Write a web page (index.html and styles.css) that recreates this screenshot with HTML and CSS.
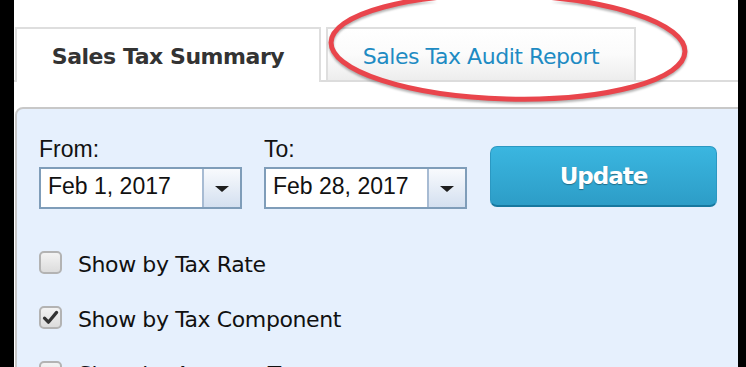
FILE: index.html
```html
<!DOCTYPE html>
<html lang="en">
<head>
 <meta charset="UTF-8">
 <title>Sales Tax Summary</title>
 <link rel="stylesheet" href="styles.css">
</head>
<body>
<div class="page">
 <div class="tabs">
  <div class="tab tab_active">Sales Tax Summary</div>
  <div class="tab tab_link">Sales Tax Audit Report</div>
 </div>
 <div class="panel">
  <div class="range">
   <div class="field">
    <label>From:</label>
    <div class="combo">
     <span class="combo_value">Feb 1, 2017</span>
     <span class="combo_btn"><span class="arrow"></span></span>
    </div>
   </div>
   <div class="field">
    <label>To:</label>
    <div class="combo">
     <span class="combo_value">Feb 28, 2017</span>
     <span class="combo_btn"><span class="arrow"></span></span>
    </div>
   </div>
   <button type="button" class="update">Update</button>
  </div>
  <div class="options">
   <label class="option"><span class="check"></span><span class="option_text">Show by Tax Rate</span></label>
   <label class="option"><span class="check"><svg width="19" height="19" viewBox="0 0 19 19"><path d="M3.5 10.2 L7.4 14.2 L15.6 4.4" fill="none" stroke="#333" stroke-width="3.2" stroke-linecap="round" stroke-linejoin="round"/></svg></span><span class="option_text">Show by Tax Component</span></label>
   <label class="option"><span class="check"></span><span class="option_text">Show by Account Type</span></label>
  </div>
 </div>
 <!-- red hand-drawn marker over the second tab -->
 <svg class="marker" width="724" height="367" viewBox="0 0 724 367">
  <ellipse cx="494" cy="47" rx="177" ry="52" transform="rotate(1.5 494 47)" fill="none" stroke="#e9454c" stroke-width="5"/>
 </svg>
</div>
</body>
</html>
```

FILE: styles.css
```css
body{
  margin: 0;
  background: #000;
  height: 367px;
  overflow: hidden;
}
.page{
  position: relative;
  margin-left: 14px;
  width: 724px;
  height: 367px;
  box-sizing: border-box;
  padding-top: 27px;
  background: #fff;
  overflow: hidden;
}
.tabs{
  display: flex;
  align-items: flex-end;
  gap: 5px;
  padding-left: 1px;
  border-bottom: 2px solid #dcdcdc;
}
.tab{
  box-sizing: border-box;
  height: 53px;
  padding-top: 15px;
  border: 2px solid #dedede;
  border-bottom: none;
  text-align: center;
  font-family: "DejaVu Sans", Verdana, sans-serif;
  font-size: 22px;
  letter-spacing: -0.45px;
  line-height: 25px;
}
.tab_active{
  width: 306px;
  height: 55px;
  margin-bottom: -2px;
  background: #fff;
  color: #333;
  font-weight: bold;
}
.tab_link{
  width: 310px;
  color: #1e8bc3;
  background: linear-gradient(#fff, #fbfbfb 50%, #ededed);
}
.panel{
  width: 760px;
  height: 300px;
  margin-top: 25px;
  margin-left: 1px;
  box-sizing: border-box;
  padding: 27px 0 0 22px;
  border: 2px solid #c8c8c8;
  border-radius: 8px;
  background: #e6f0fd;
}
.range{
  display: flex;
  align-items: flex-end;
  gap: 22px;
}
.field label{
  display: block;
  margin-bottom: 5px;
  font-family: "Liberation Sans", Arial, sans-serif;
  font-size: 23px;
  line-height: 26px;
  color: #111;
}
.combo{
  display: flex;
  width: 203px;
  height: 42px;
  box-sizing: border-box;
  border: 2px solid #7f9db9;
  background: #fff;
}
.combo_value{
  flex: 1;
  padding-left: 7px;
  font-family: "Liberation Sans", Arial, sans-serif;
  font-size: 23px;
  line-height: 34px;
  color: #111;
}
.combo_btn{
  display: flex;
  align-items: center;
  justify-content: center;
  width: 38px;
  box-sizing: border-box;
  border-left: 2px solid #a7bbd3;
  background: linear-gradient(#f8fafd, #d4e0f0);
}
.arrow{
  margin-top: 1px;
  border-left: 7px solid transparent;
  border-right: 7px solid transparent;
  border-top: 6px solid #1e1e1e;
}
.update{
  width: 227px;
  height: 61px;
  margin: 0 0 2px 1px;
  border: 1px solid #2b98c2;
  border-bottom: 2px solid #17789f;
  border-radius: 7px;
  background: linear-gradient(#3ab6e0, #2d9dc7);
  color: #fff;
  font-family: "DejaVu Sans", Verdana, sans-serif;
  font-size: 23px;
  font-weight: bold;
  letter-spacing: -1px;
  text-shadow: 0 1px 1px rgba(0,0,0,0.35);
}
.options{
  margin-top: 26px;
}
.option{
  display: flex;
  align-items: center;
  gap: 16px;
  height: 55px;
  font-family: "DejaVu Sans", Verdana, sans-serif;
  font-size: 22px;
  letter-spacing: -0.4px;
  color: #111;
}
.option_text{
  margin-top: 3px;
}
.check{
  display: flex;
  align-items: center;
  justify-content: center;
  width: 23px;
  height: 23px;
  box-sizing: border-box;
  border: 2px solid #b3b3b3;
  border-radius: 5px;
  background: linear-gradient(#f3f3f3, #dcdcdc);
}
.marker{
  position: absolute;
  left: 0;
  top: 0;
  pointer-events: none;
  filter: drop-shadow(0 2px 1px rgba(0,0,0,0.3));
}
```
